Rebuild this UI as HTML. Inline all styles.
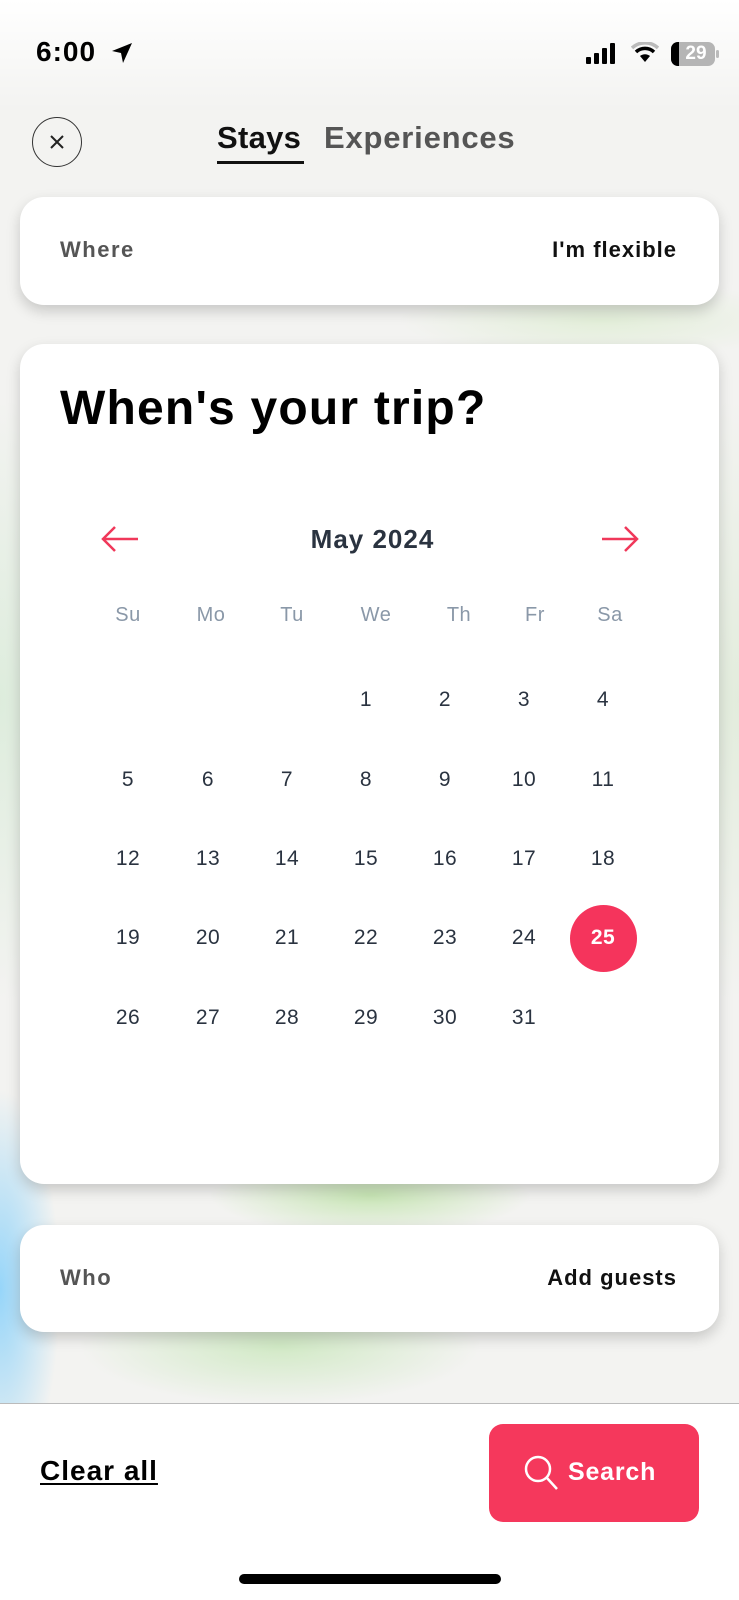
<!DOCTYPE html>
<html><head><meta charset="utf-8"><style>
*{margin:0;padding:0;box-sizing:border-box}
body{width:739px;height:1600px;overflow:hidden;font-family:"Liberation Sans",sans-serif;position:relative;
background:
radial-gradient(ellipse 60px 200px at 0px 1290px,rgba(140,210,250,.9),transparent),
radial-gradient(ellipse 160px 40px at 370px 1195px,rgba(170,220,140,.6),transparent),
radial-gradient(ellipse 200px 60px at 280px 1345px,rgba(180,225,160,.55),transparent),
radial-gradient(ellipse 120px 300px at 0px 700px,rgba(200,230,200,.5),transparent),
radial-gradient(ellipse 120px 300px at 739px 700px,rgba(210,230,200,.5),transparent),
radial-gradient(ellipse 200px 40px at 600px 320px,rgba(215,235,200,.6),transparent),
#f3f3f1;}
.abs{position:absolute}
.card{position:absolute;left:20px;width:699px;background:#fff;border-radius:24px;box-shadow:0 6px 14px rgba(0,0,0,.18)}
.day{position:absolute;width:60px;margin-left:-30px;text-align:center;font-size:21px;color:#2a3340;letter-spacing:.5px}
.wd{position:absolute;width:60px;margin-left:-30px;text-align:center;font-size:20px;color:#8a98a8;letter-spacing:.5px}
</style></head><body>
<div class="abs" style="left:0;top:0;width:739px;height:110px;background:linear-gradient(#fff,rgba(255,255,255,0))"></div>
<div class="abs" style="left:36px;top:36px;font-size:28px;font-weight:bold;color:#000;letter-spacing:1px">6:00</div>
<svg class="abs" style="left:110px;top:41px" width="24" height="24" viewBox="0 0 24 24"><path d="M22 2 L2 10 L11 12 L13 22 Z" fill="#000"/></svg>
<svg class="abs" style="left:586px;top:43px" width="36" height="22" viewBox="0 0 36 22"><rect x="0" y="14" width="5" height="7" rx="1"/><rect x="8" y="10" width="5" height="11" rx="1"/><rect x="16" y="5" width="5" height="16" rx="1"/><rect x="24" y="0" width="5" height="21" rx="1"/></svg>
<svg class="abs" style="left:631px;top:42px" width="28" height="22" viewBox="0 0 28 22"><path d="M14 20 L9 14 A8 8 0 0 1 19 14 Z" fill="#000"/><path d="M5 10 A13 13 0 0 1 23 10" stroke="#000" stroke-width="3.5" fill="none"/><path d="M1 6 A19 19 0 0 1 27 6" stroke="#bbb" stroke-width="3.5" fill="none"/></svg>
<div class="abs" style="left:671px;top:42px;width:44px;height:24px;border-radius:7px;background:#b5b5b5;overflow:hidden"><div style="width:8px;height:24px;background:#000"></div><div class="abs" style="left:8px;top:1px;width:34px;text-align:center;color:#fff;font-weight:bold;font-size:19px">29</div></div>
<div class="abs" style="left:716px;top:50px;width:3px;height:8px;background:#bbb;border-radius:2px"></div>

<div class="abs" style="left:32px;top:117px;width:50px;height:50px;border:1.5px solid #333;border-radius:50%"></div>
<svg class="abs" style="left:48px;top:133px" width="18" height="18" viewBox="0 0 18 18"><path d="M3 3 L15 15 M15 3 L3 15" stroke="#222" stroke-width="2"/></svg>
<div class="abs" style="left:217px;top:120px;font-size:31px;font-weight:bold;color:#111;letter-spacing:.3px">Stays</div>
<div class="abs" style="left:217px;top:161px;width:87px;height:3px;background:#111"></div>
<div class="abs" style="left:324px;top:120px;font-size:31px;font-weight:bold;color:#555;letter-spacing:.8px">Experiences</div>

<div class="card" style="top:197px;height:108px">
<div class="abs" style="left:40px;top:40px;font-size:22px;font-weight:bold;color:#555;letter-spacing:1.5px">Where</div>
<div class="abs" style="right:42px;top:40px;font-size:22px;font-weight:bold;color:#111;letter-spacing:1px">I'm flexible</div>
</div>

<div class="card" style="top:344px;height:840px">
<div class="abs" style="left:40px;top:37px;font-size:48px;font-weight:bold;color:#000;letter-spacing:1.2px">When's your trip?</div>
<svg class="abs" style="left:80px;top:180px" width="40" height="30" viewBox="0 0 40 30"><path d="M38 15 H3 M15 3 L3 15 L15 27" stroke="#f0385a" stroke-width="2.5" fill="none"/></svg>
<svg class="abs" style="left:580px;top:180px" width="40" height="30" viewBox="0 0 40 30"><path d="M2 15 H37 M25 3 L37 15 L25 27" stroke="#f0385a" stroke-width="2.5" fill="none"/></svg>
<div class="abs" style="left:0;width:699px;top:180px;text-align:center;font-size:26px;font-weight:bold;color:#2a3340;padding-left:6px;letter-spacing:1px">May 2024</div>
</div>
<div class="wd" style="left:128px;top:604px">Su</div><div class="wd" style="left:211px;top:604px">Mo</div><div class="wd" style="left:292px;top:604px">Tu</div><div class="wd" style="left:376px;top:604px">We</div><div class="wd" style="left:459px;top:604px">Th</div><div class="wd" style="left:535px;top:604px">Fr</div><div class="wd" style="left:610px;top:604px">Sa</div>
<div class="abs" style="left:570px;top:905px;width:67px;height:67px;border-radius:50%;background:#f5345c"></div>
<div class="day" style="left:366px;top:688px">1</div><div class="day" style="left:445px;top:688px">2</div><div class="day" style="left:524px;top:688px">3</div><div class="day" style="left:603px;top:688px">4</div>
<div class="day" style="left:128px;top:768px">5</div><div class="day" style="left:208px;top:768px">6</div><div class="day" style="left:287px;top:768px">7</div><div class="day" style="left:366px;top:768px">8</div><div class="day" style="left:445px;top:768px">9</div><div class="day" style="left:524px;top:768px">10</div><div class="day" style="left:603px;top:768px">11</div>
<div class="day" style="left:128px;top:847px">12</div><div class="day" style="left:208px;top:847px">13</div><div class="day" style="left:287px;top:847px">14</div><div class="day" style="left:366px;top:847px">15</div><div class="day" style="left:445px;top:847px">16</div><div class="day" style="left:524px;top:847px">17</div><div class="day" style="left:603px;top:847px">18</div>
<div class="day" style="left:128px;top:926px">19</div><div class="day" style="left:208px;top:926px">20</div><div class="day" style="left:287px;top:926px">21</div><div class="day" style="left:366px;top:926px">22</div><div class="day" style="left:445px;top:926px">23</div><div class="day" style="left:524px;top:926px">24</div><div class="day" style="left:603px;top:926px;color:#fff;font-weight:bold">25</div>
<div class="day" style="left:128px;top:1006px">26</div><div class="day" style="left:208px;top:1006px">27</div><div class="day" style="left:287px;top:1006px">28</div><div class="day" style="left:366px;top:1006px">29</div><div class="day" style="left:445px;top:1006px">30</div><div class="day" style="left:524px;top:1006px">31</div>

<div class="card" style="top:1225px;height:107px">
<div class="abs" style="left:40px;top:40px;font-size:22px;font-weight:bold;color:#555;letter-spacing:1.5px">Who</div>
<div class="abs" style="right:42px;top:40px;font-size:22px;font-weight:bold;color:#111;letter-spacing:1px">Add guests</div>
</div>

<div class="abs" style="left:0;top:1403px;width:739px;height:197px;background:#fff;border-top:1.5px solid #bbb"></div>
<div class="abs" style="left:40px;top:1455px;font-size:28px;font-weight:bold;color:#000;text-decoration:underline;text-underline-offset:3px;letter-spacing:1px">Clear all</div>
<div class="abs" style="left:489px;top:1424px;width:210px;height:98px;border-radius:14px;background:#f5385c"></div>
<svg class="abs" style="left:523px;top:1454px" width="38" height="38" viewBox="0 0 38 38"><circle cx="15" cy="15" r="12" stroke="#fff" stroke-width="2.5" fill="none"/><path d="M24 24 L34 35" stroke="#fff" stroke-width="2.5"/></svg>
<div class="abs" style="left:568px;top:1458px;font-size:25px;font-weight:bold;color:#fff;letter-spacing:.8px">Search</div>
<div class="abs" style="left:239px;top:1574px;width:262px;height:10px;border-radius:5px;background:#000"></div>
</body></html>
